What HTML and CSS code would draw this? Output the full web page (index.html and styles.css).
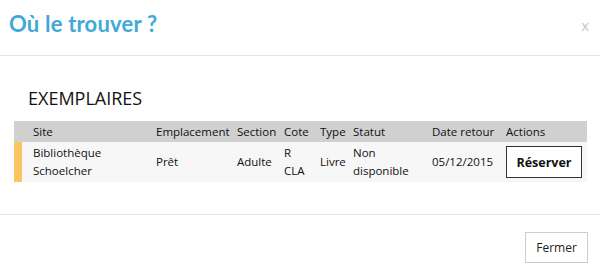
FILE: index.html
```html
<!DOCTYPE html>
<html lang="fr">
<head>
  <meta charset="UTF-8" />
  <title>Où le trouver ?</title>
  <link rel="stylesheet" href="styles.css">
</head>
<body>
  <div class="modal">
    <div class="modal-header">
      <h1>Où le trouver ?</h1>
      <span class="close">x</span>
    </div>

    <div class="modal-body">
      <h2>EXEMPLAIRES</h2>
      <table class="items">
        <colgroup>
          <col class="c-site">
          <col class="c-empl">
          <col class="c-sect">
          <col class="c-cote">
          <col class="c-type">
          <col class="c-stat">
          <col class="c-date">
          <col class="c-act">
        </colgroup>
        <thead>
          <tr>
            <th class="first">Site</th>
            <th>Emplacement</th>
            <th>Section</th>
            <th>Cote</th>
            <th>Type</th>
            <th>Statut</th>
            <th>Date retour</th>
            <th>Actions</th>
          </tr>
        </thead>
        <tbody>
          <tr>
            <td class="first">Bibliothèque Schoelcher</td>
            <td>Prêt</td>
            <td>Adulte</td>
            <td>R CLA</td>
            <td>Livre</td>
            <td>Non disponible</td>
            <td>05/12/2015</td>
            <td><button class="btn-reserve">Réserver</button></td>
          </tr>
        </tbody>
      </table>
    </div>

    <div class="modal-footer">
      <button class="btn-close">Fermer</button>
    </div>
  </div>
</body>
</html>
```

FILE: styles.css
```css
body {
  margin: 0;
  font-family: "Open Sans", "DejaVu Sans", sans-serif;
  background: #fff;
  color: #111;
}
.modal {
  width: 600px;
}
.modal-header {
  display: flex;
  justify-content: space-between;
  align-items: flex-start;
  height: 56px;
  box-sizing: border-box;
  padding: 10px 9px 0 9px;
  border-bottom: 1px solid #e5e5e5;
}
.modal-header h1 {
  margin: 0;
  font-family: Lato, sans-serif;
  font-size: 22px;
  font-weight: bold;
  color: #41a8d8;
  letter-spacing: 0.2px;
}
.close {
  font-size: 15px;
  color: #c8c8c8;
  margin: 5px 2px 0 0;
}
.modal-body {
  padding: 30px 13px 32px 14px;
  border-bottom: 1px solid #e5e5e5;
}
.modal-body h2 {
  margin: 0 0 10px 14px;
  font-size: 18px;
  font-weight: normal;
  line-height: 25px;
  color: #111;
}
.items {
  width: 573px;
  border-collapse: separate;
  border-spacing: 0;
  table-layout: fixed;
  font-size: 11.5px;
}
.c-site { width: 137px; }
.c-empl { width: 81px; }
.c-sect { width: 47px; }
.c-cote { width: 36px; }
.c-type { width: 33px; }
.c-stat { width: 79px; }
.c-date { width: 74px; }
.c-act { width: 86px; }
.items th {
  background: #d0d0d0;
  font-weight: normal;
  text-align: left;
  white-space: nowrap;
  height: 21px;
  padding: 0 5px;
  line-height: 21px;
}
.items th.first {
  padding-left: 19px;
}
.items td {
  background: #f8f7f7;
  padding: 2px 5px 2px 5px;
  line-height: 18px;
  vertical-align: middle;
}
.items td.first {
  border-left: 8px solid #fbc463;
  padding-left: 11px;
}
.btn-reserve {
  font-family: "Open Sans", sans-serif;
  font-size: 12.5px;
  font-weight: bold;
  width: 76px;
  height: 32px;
  background: #fff;
  border: 1px solid #333;
  color: #111;
  padding: 0;
}
.modal-footer {
  display: flex;
  justify-content: flex-end;
  padding: 17px 12px 0 0;
}
.btn-close {
  font-family: "Open Sans", sans-serif;
  font-size: 12px;
  width: 63px;
  height: 31px;
  background: #fff;
  border: 1px solid #ccc;
  color: #222;
  padding: 0;
}
```
